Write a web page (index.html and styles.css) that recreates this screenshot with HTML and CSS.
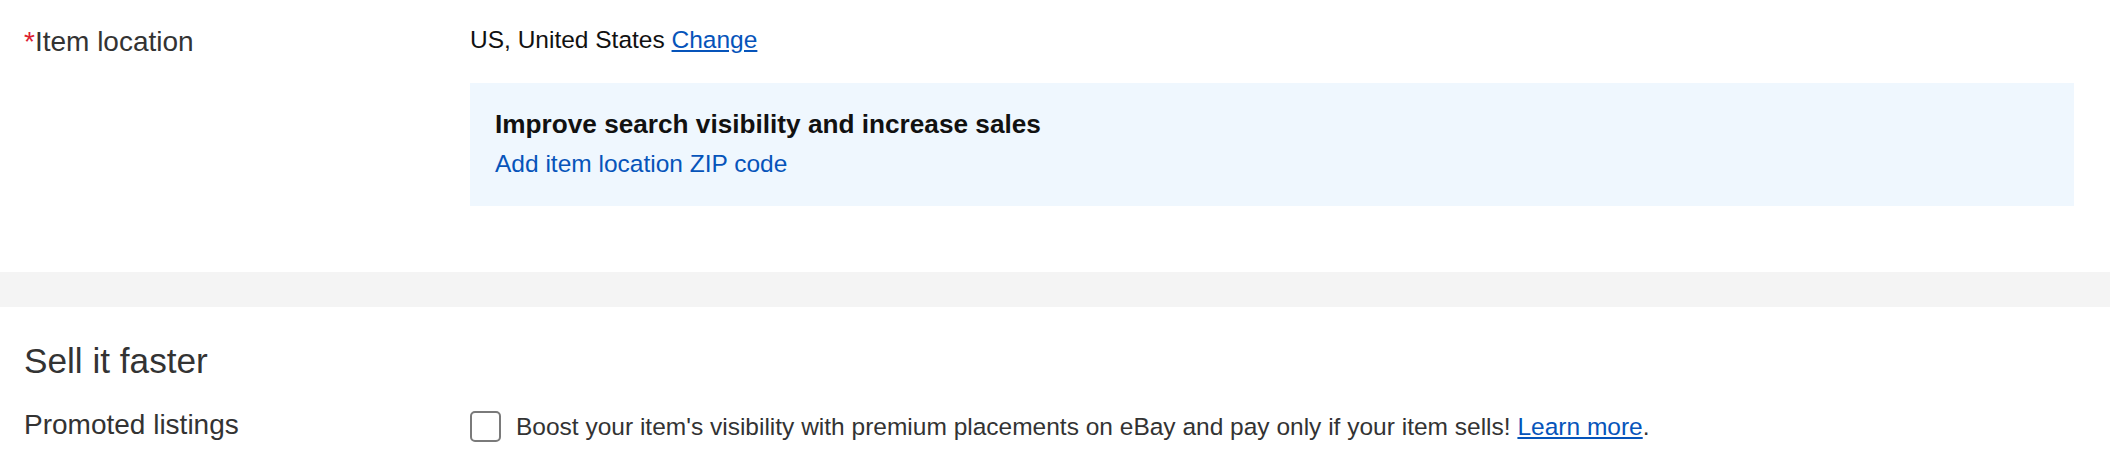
FILE: index.html
```html
<!DOCTYPE html>
<html lang="en">
<head>
  <meta charset="UTF-8">
  <meta name="viewport" content="width=device-width, initial-scale=1.0">
  <title>Listing details</title>
  <link rel="stylesheet" href="styles.css">
</head>
<body>
  <section class="panel panel-location">
    <div class="field-row">
      <div class="field-label"><span class="req">*</span>Item location</div>
      <div class="field-value">
        <p class="location">US, United States <a href="#">Change</a></p>
        <div class="notice">
          <h4>Improve search visibility and increase sales</h4>
          <a href="#">Add item location ZIP code</a>
        </div>
      </div>
    </div>
  </section>

  <div class="divider"></div>

  <section class="panel panel-promo">
    <h2>Sell it faster</h2>
    <div class="field-row">
      <div class="field-label">Promoted listings</div>
      <div class="field-value">
        <label class="check-row">
          <span class="checkbox"></span>
          <span>Boost your item's visibility with premium placements on eBay and pay only if your item sells! <a href="#">Learn more</a>.</span>
        </label>
      </div>
    </div>
  </section>
</body>
</html>
```

FILE: styles.css
```css
* {
  margin: 0;
  padding: 0;
  box-sizing: border-box;
  font-family: 'Liberation Sans', Arial, sans-serif;
}

body {
  background: #fff;
  color: #333;
}

a {
  color: #0654ba;
}

.panel {
  padding: 0 36px 0 24px;
}

.panel-location {
  padding-top: 22px;
  padding-bottom: 66px;
}

.panel-promo {
  padding-top: 34px;
  padding-bottom: 30px;
}

.field-row {
  display: grid;
  grid-template-columns: 446px 1fr;
}

.field-label {
  font-size: 28px;
  line-height: 40px;
  color: #333;
}

.req {
  color: #dd1e31;
}

.location {
  font-size: 24.5px;
  line-height: 35px;
  color: #111;
}

.notice {
  margin-top: 26px;
  background-color: #eff7fe;
  padding: 26px 25px 26px;
}

.notice h4 {
  font-size: 26.2px;
  line-height: 31px;
  font-weight: bold;
  color: #111;
  margin-bottom: 8px;
}

.notice a {
  display: block;
  font-size: 24.5px;
  line-height: 32px;
  text-decoration: none;
}

.divider {
  height: 35px;
  background-color: #f4f4f4;
}

.panel-promo h2 {
  font-size: 35.2px;
  line-height: 40px;
  font-weight: normal;
  color: #333;
  margin-bottom: 24px;
}

.check-row {
  display: flex;
  align-items: center;
  gap: 15px;
  margin-top: 4px;
  font-size: 24.5px;
  line-height: 35px;
  color: #333;
}

.checkbox {
  width: 31px;
  height: 31px;
  border: 2px solid #7a7a7a;
  border-radius: 5px;
  flex-shrink: 0;
}
```
